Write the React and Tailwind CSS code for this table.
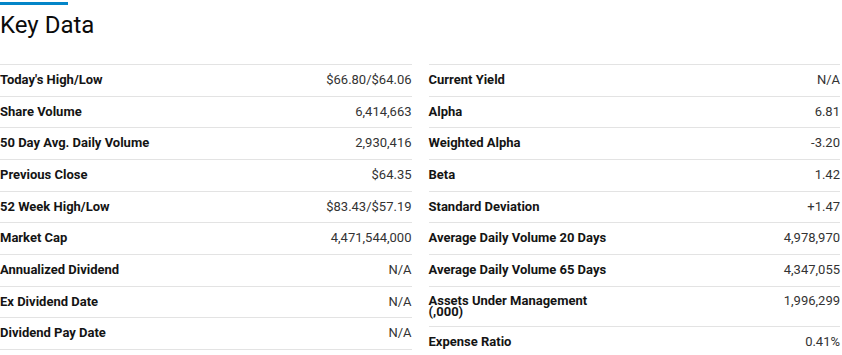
import React from "react";

const leftRows = [
  { label: "Today's High/Low", value: "$66.80/$64.06" },
  { label: "Share Volume", value: "6,414,663" },
  { label: "50 Day Avg. Daily Volume", value: "2,930,416" },
  { label: "Previous Close", value: "$64.35" },
  { label: "52 Week High/Low", value: "$83.43/$57.19" },
  { label: "Market Cap", value: "4,471,544,000" },
  { label: "Annualized Dividend", value: "N/A" },
  { label: "Ex Dividend Date", value: "N/A" },
  { label: "Dividend Pay Date", value: "N/A" },
];

const rightRows = [
  { label: "Current Yield", value: "N/A" },
  { label: "Alpha", value: "6.81" },
  { label: "Weighted Alpha", value: "-3.20" },
  { label: "Beta", value: "1.42" },
  { label: "Standard Deviation", value: "+1.47" },
  { label: "Average Daily Volume 20 Days", value: "4,978,970" },
  { label: "Average Daily Volume 65 Days", value: "4,347,055" },
  { label: "Assets Under Management (,000)", value: "1,996,299", tall: true },
  { label: "Expense Ratio", value: "0.41%" },
];

const Row = ({ row }) => {
  // the AUM label wraps onto two lines, so that row grows
  if (row.tall) {
    return (
      <div className="flex justify-between items-start border-t border-[#e3e3e3] py-2 text-[13px] leading-[11.7px]">
        <span className="w-[160px] font-bold text-[#141414]">{row.label}</span>
        <span className="text-[#333]">{row.value}</span>
      </div>
    );
  }
  return (
    <div className="flex justify-between items-center h-[31.67px] pb-[1px] border-t border-[#e3e3e3] text-[13px]">
      <span className="font-bold text-[#141414]">{row.label}</span>
      <span className="text-[#333]">{row.value}</span>
    </div>
  );
};

const App = () => {
  return (
    <div className="w-[842px] h-[355px] overflow-hidden bg-white font-['Roboto',sans-serif]">
      <div className="mt-[2px] h-[3px] w-[68px] bg-[#0485c8]" />
      <h2 className="mt-[6px] text-[24px] leading-[28px] text-[#0b0b0b]">
        Key Data
      </h2>

      <div className="mt-[25px] grid w-[840px] grid-cols-2 gap-x-[17px] items-start">
        <div className="border-b border-[#e3e3e3]">
          {leftRows.map((row) => (
            <Row key={row.label} row={row} />
          ))}
        </div>
        <div className="border-b border-[#e3e3e3]">
          {rightRows.map((row) => (
            <Row key={row.label} row={row} />
          ))}
        </div>
      </div>
    </div>
  );
};

export default App;
